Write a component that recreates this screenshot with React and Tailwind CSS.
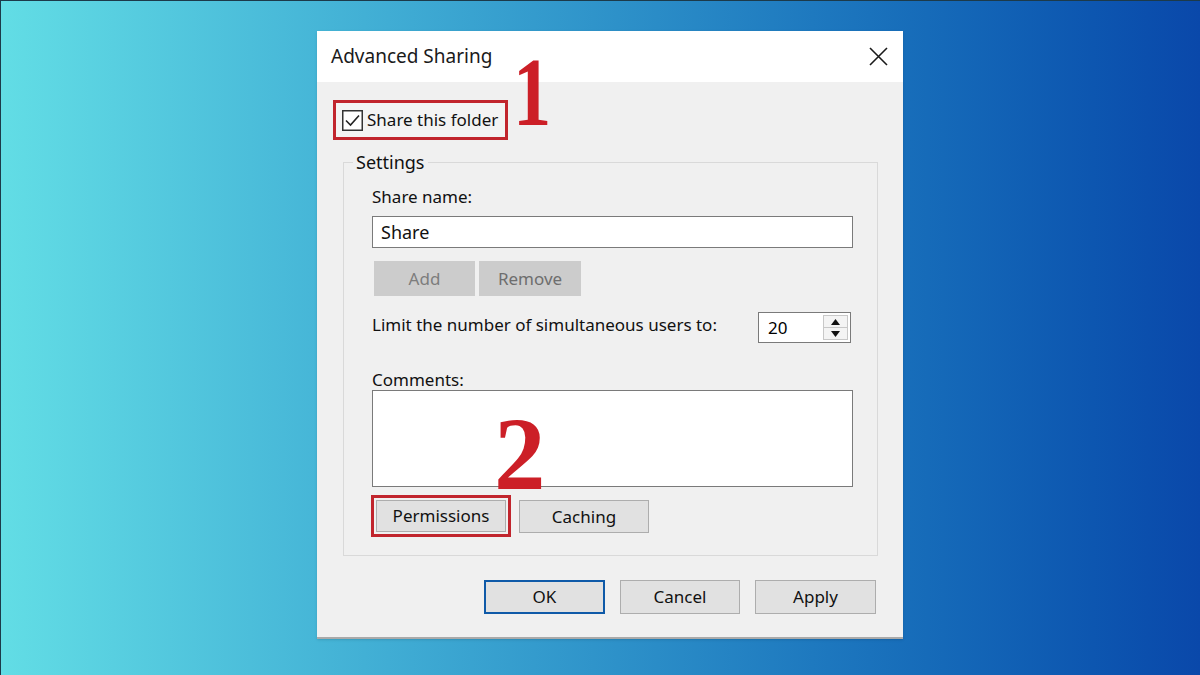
import React from 'react';

const font = { fontFamily: '"Noto Sans", "Open Sans", sans-serif' };

function WinButton({ children, className = '', border = 'border border-[#adadad]' }) {
  return (
    <div className={`flex items-center justify-center bg-[#e1e1e1] text-[17px] text-[#111] ${border} ${className}`}>
      {children}
    </div>
  );
}

function Spinner() {
  return (
    <div className="flex h-[31px] w-[93px] items-stretch border border-[#7a7a7a] bg-white">
      <div className="flex flex-1 items-center pl-[9px] text-[17px] text-black">20</div>
      <div className="my-[2px] mr-[2px] flex w-[25px] flex-col border border-[#c8c8c8] bg-[#f4f4f4]">
        <div className="flex flex-1 items-center justify-center border-b border-[#c8c8c8]">
          <svg width="9" height="6" viewBox="0 0 9 6">
            <path d="M0 6 L4.5 0 L9 6 Z" fill="#111" />
          </svg>
        </div>
        <div className="flex flex-1 items-center justify-center">
          <svg width="9" height="6" viewBox="0 0 9 6">
            <path d="M0 0 L4.5 6 L9 0 Z" fill="#111" />
          </svg>
        </div>
      </div>
    </div>
  );
}

export default function App() {
  return (
    <div
      className="h-[675px] w-[1200px] overflow-hidden border-l border-t border-[#1c3a4a] bg-gradient-to-r from-[#62dde5] to-[#0a48aa] pl-[316px] pt-[30px]"
      style={font}
    >
      {/* Dialog */}
      <div className="relative flex h-[608px] w-[586px] flex-col border-b-2 border-[#a9a9a9] bg-[#f0f0f0] shadow-sm">
        {/* Title bar */}
        <div className="flex h-[51px] items-center justify-between bg-white pl-[14px] pr-[15px]">
          <span className="text-[19px] text-[#1a1a1a]">Advanced Sharing</span>
          <svg width="19" height="19" viewBox="0 0 19 19">
            <path d="M1 1 L18 18 M18 1 L1 18" stroke="#1a1a1a" strokeWidth="1.6" fill="none" />
          </svg>
        </div>

        {/* Body */}
        <div className="flex flex-1 flex-col pl-[16px] pt-[18px]">
          {/* Share this folder, step 1 */}
          <div className="flex h-[40px] w-[175px] items-center gap-[4px] border-3 border-[#c1252d] bg-[#f3f3f3] pl-[6px]">
            <svg width="21" height="21" viewBox="0 0 21 21" className="shrink-0">
              <rect x="0.75" y="0.75" width="19.5" height="19.5" fill="white" stroke="#333" strokeWidth="1.5" />
              <path d="M4 10.5 L8.5 15 L17 5.5" stroke="#222" strokeWidth="1.6" fill="none" />
            </svg>
            <span className="whitespace-nowrap text-[17px] text-[#111]">Share this folder</span>
          </div>

          {/* Settings group */}
          <fieldset className="ml-[10px] mt-[10px] w-[535px] border border-[#d9d9d9] pb-[18px] pl-[28px] pr-[24px]">
            <legend className="-ml-[19px] px-[3px] text-[18px] leading-[24px] text-[#111]">Settings</legend>
            <div className="mt-[11px] text-[17px] leading-[24px] text-[#111]">Share name:</div>
            <div className="mt-[7px] flex h-[32px] items-center border border-[#7a7a7a] bg-white pl-[8px] text-[18px] text-[#111]">
              Share
            </div>
            <div className="mt-[13px] flex gap-[4px] pl-[2px]">
              <div className="flex h-[35px] w-[101px] items-center justify-center bg-[#cccccc] text-[17px] text-[#7d7d7d]">
                Add
              </div>
              <div className="flex h-[35px] w-[102px] items-center justify-center bg-[#cccccc] text-[17px] text-[#6e6e6e]">
                Remove
              </div>
            </div>
            <div className="mt-[16px] flex items-start justify-between pr-[2px]">
              <span className="pt-[1px] text-[17px] leading-[24px] text-[#111]">
                Limit the number of simultaneous users to:
              </span>
              <Spinner />
            </div>
            <div className="mt-[27px] text-[17px] leading-[20px] text-[#111]">Comments:</div>
            <div className="h-[97px] border border-[#7a7a7a] bg-white" />
            <div className="mt-[8px] flex items-start gap-[8px]">
              <div className="-ml-[1px] h-[42px] w-[140px] border-3 border-[#c1252d] p-[2px]">
                <WinButton className="h-full w-full">Permissions</WinButton>
              </div>
              <WinButton className="mt-[5px] h-[33px] w-[130px]">Caching</WinButton>
            </div>
          </fieldset>

          {/* Dialog buttons */}
          <div className="mt-[24px] flex justify-end gap-[15px] pr-[27px]">
            <WinButton border="border-2 border-[#0f5aa8]" className="h-[34px] w-[121px]">
              OK
            </WinButton>
            <WinButton className="h-[34px] w-[120px]">Cancel</WinButton>
            <WinButton className="h-[34px] w-[121px]">Apply</WinButton>
          </div>
        </div>

        {/* Step numerals */}
        <span
          className="absolute left-[196px] top-[12px] origin-left scale-x-[0.78] text-[98px] font-bold leading-none text-[#cc1f27]"
          style={{ fontFamily: '"Liberation Serif", serif' }}
        >
          1
        </span>
        <span
          className="absolute left-[177px] top-[372px] text-[103px] font-bold leading-none text-[#cc1f27]"
          style={{ fontFamily: '"Liberation Serif", serif' }}
        >
          2
        </span>
      </div>
    </div>
  );
}
